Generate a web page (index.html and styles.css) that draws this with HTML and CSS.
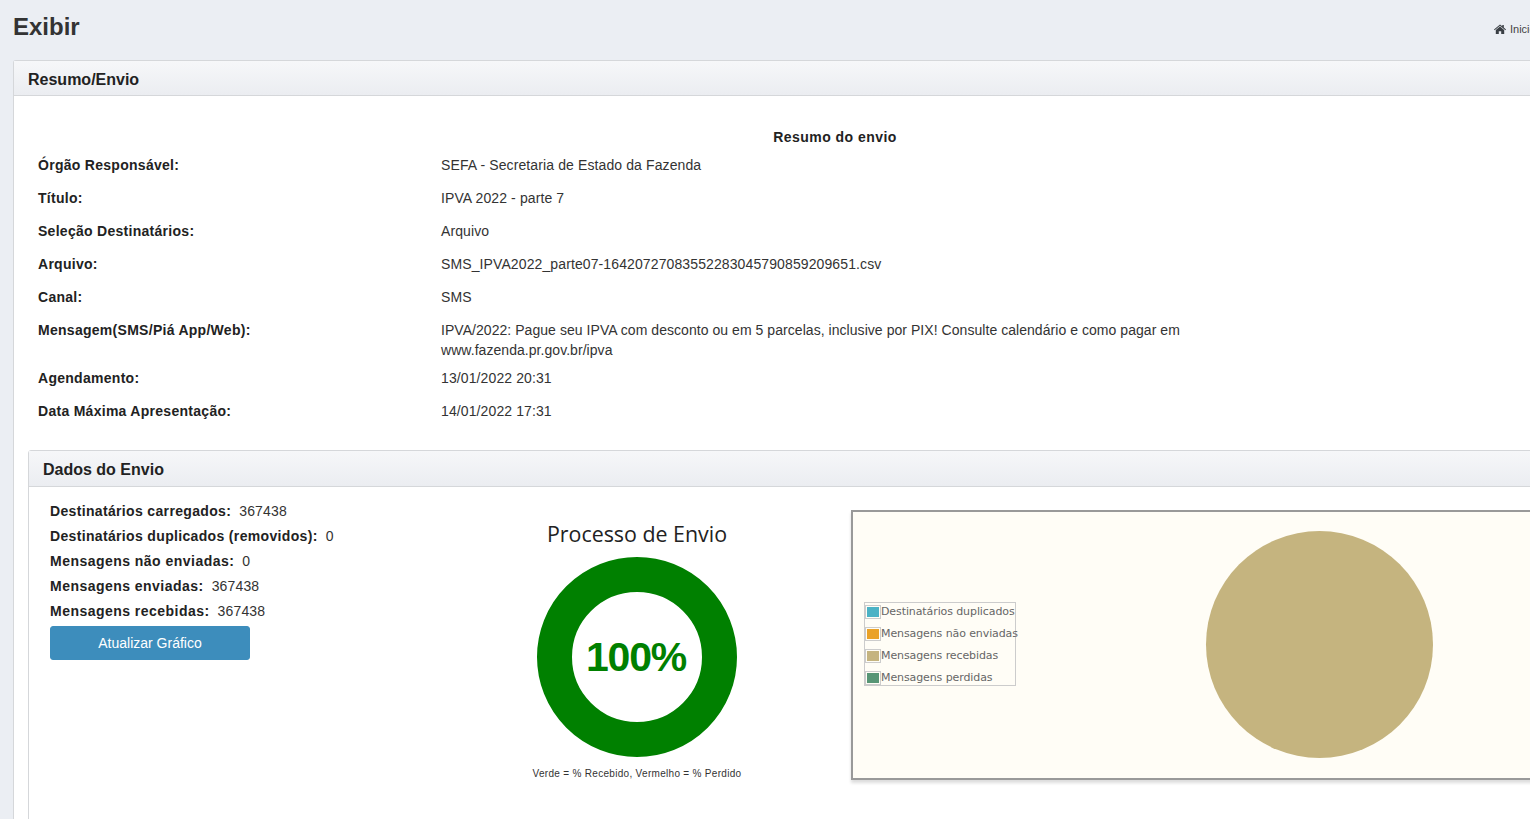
FILE: index.html
```html
<!DOCTYPE html>
<html lang="pt-BR">
<head>
<meta charset="utf-8">
<title>Exibir</title>
<link rel="stylesheet" href="styles.css">
</head>
<body>
<div class="page">
  <header class="page-header">
    <h1 class="page-title">Exibir</h1>
    <nav class="crumb">
      <svg class="home" viewBox="0 0 12 10" width="12" height="10"><path d="M6 .4 0 5.4l.6.8L6 1.8l5.4 4.4.6-.8-2.2-1.8V1H8.3v1.3zM1.8 6v4h3V7.2h2.4V10h3V6L6 2.6z" fill="#3a3f44"/></svg>
      <span>Inicio</span>
    </nav>
  </header>
  <section class="panel">
    <div class="panel-head"><h2 class="panel-title">Resumo/Envio</h2></div>
    <div class="panel-body">
      <div class="summary-title">Resumo do envio</div>
      <dl class="summary">
        <dt>Órgão Responsável:</dt><dd>SEFA - Secretaria de Estado da Fazenda</dd>
        <dt>Título:</dt><dd>IPVA 2022 - parte 7</dd>
        <dt>Seleção Destinatários:</dt><dd>Arquivo</dd>
        <dt>Arquivo:</dt><dd>SMS_IPVA2022_parte07-16420727083552283045790859209651.csv</dd>
        <dt>Canal:</dt><dd>SMS</dd>
        <dt>Mensagem(SMS/Piá App/Web):</dt><dd class="long">IPVA/2022: Pague seu IPVA com desconto ou em 5 parcelas, inclusive por PIX! Consulte calendário e como pagar em www.fazenda.pr.gov.br/ipva</dd>
        <dt>Agendamento:</dt><dd>13/01/2022 20:31</dd>
        <dt>Data Máxima Apresentação:</dt><dd>14/01/2022 17:31</dd>
      </dl>
      <section class="panel inner">
        <div class="panel-head inner-head"><h2 class="panel-title">Dados do Envio</h2></div>
        <div class="data-body">
          <div class="stats">
            <p class="stat"><b>Destinatários carregados:</b> 367438</p>
            <p class="stat"><b>Destinatários duplicados (removidos):</b> 0</p>
            <p class="stat msg"><b>Mensagens não enviadas:</b> 0</p>
            <p class="stat msg"><b>Mensagens enviadas:</b> 367438</p>
            <p class="stat msg"><b>Mensagens recebidas:</b> 367438</p>
            <button class="btn" type="button">Atualizar Gráfico</button>
          </div>
          <div class="gauge-col">
            <div class="gauge-title">Processo de Envio</div>
            <div class="gauge"><span class="gauge-value">100%</span></div>
            <div class="gauge-note">Verde = % Recebido, Vermelho = % Perdido</div>
          </div>
          <div class="chart">
            <div class="pie"></div>
            <ul class="legend">
              <li><i class="swatch c1"></i>Destinatários duplicados</li>
              <li><i class="swatch c2"></i>Mensagens não enviadas</li>
              <li><i class="swatch c3"></i>Mensagens recebidas</li>
              <li><i class="swatch c4"></i>Mensagens perdidas</li>
            </ul>
          </div>
        </div>
      </section>
    </div>
  </section>
</div>
</body>
</html>
```
FILE: styles.css
```css
html, body { margin: 0; height: 100%; overflow: hidden; }
body { background: #ebeef3; font-family: "Liberation Sans", Arial, sans-serif; font-size: 14px; color: #222; }
.page { width: 1600px; height: 819px; padding: 0 0 0 13px; box-sizing: border-box; }
.page-header { display: flex; justify-content: space-between; height: 60px; width: 1587px; box-sizing: border-box; }
.page-title { margin: 13px 0 0; font-size: 24px; line-height: 28px; font-weight: 700; color: #333; }
.crumb { display: flex; align-items: center; gap: 4px; height: 12px; margin-top: 23px; width: 106px; font-size: 11px; color: #444; box-sizing: border-box; }
.panel { background: #fff; border: 1px solid #d5d7da; border-radius: 3px 0 0 3px; }
.page > .panel { width: 1587px; box-sizing: border-box; height: 800px; border-bottom: 0; }
.panel-head { height: 30px; padding: 4px 14px 0; display: flex; align-items: center; background: linear-gradient(#f6f7f9, #ebedf1); border-bottom: 1px solid #d5d7da; }
.inner-head { height: 33px; padding-top: 2px; }
.panel-title { margin: 0; font-size: 16px; font-weight: 700; color: #222; }
.panel-body { padding: 33px 0 0 14px; }
.summary-title { width: 1614px; font-weight: 700; text-align: center; line-height: 16px; letter-spacing: .47px; }
.summary { display: grid; grid-template-columns: 403px 740px; margin: 10px 0 0; padding-left: 10px; row-gap: 13px; }
.summary dt { font-weight: 700; line-height: 20px; letter-spacing: .28px; color: #222; }
.summary dd { margin: 0; line-height: 20px; letter-spacing: .11px; color: #333; }
.summary .long { margin-bottom: -5px; letter-spacing: .05px; }
.inner { margin-top: 29px; width: 1540px; height: 400px; }
.data-body { display: flex; padding: 14px 0 0 21px; }
.stats { width: 387px; flex: none; }
.stat { margin: 0; height: 25px; line-height: 20px; letter-spacing: .14px; color: #333; }
.stat b { letter-spacing: .34px; color: #222; margin-right: 4px; }
.msg b { letter-spacing: .47px; }
.btn { display: block; width: 200px; height: 34px; padding: 0; background: #3d8dbc; border: 1px solid #3d8dbc; border-radius: 3px; color: #fff; font: 14px "Liberation Sans", Arial, sans-serif; }
.gauge-col { width: 400px; flex: none; display: flex; flex-direction: column; align-items: center; padding-top: 18px; }
.gauge-title { font-family: "Open Sans", sans-serif; font-size: 21.4px; line-height: 30px; color: #222; }
.gauge { width: 200px; height: 200px; margin-top: 8px; box-sizing: border-box; border: 35px solid #008000; border-radius: 50%; display: flex; align-items: center; justify-content: center; }
.gauge-value { font-size: 41px; font-weight: 700; letter-spacing: -1.2px; margin-left: -2px; color: #008000; }
.gauge-note { margin-top: 11px; font-size: 10px; line-height: 12px; letter-spacing: .3px; color: #333; }
.chart { position: relative; flex: none; margin: 9px 0 0 14px; width: 900px; height: 270px; box-sizing: border-box; background: #fffdf6; border: 2px solid #999; box-shadow: 0 3px 3px #ddd; }
.pie { position: absolute; left: 353px; top: 19px; width: 227px; height: 227px; border-radius: 50%; background: #c5b47f; }
.legend { position: absolute; left: 11px; top: 90px; margin: 0; padding: 0; list-style: none; width: 150px; height: 82px; background: #fffdf6; border: 1px solid #ccc; font: 11px/22px "DejaVu Sans", Verdana, sans-serif; letter-spacing: -.1px; color: #666; white-space: nowrap; }
.legend li { display: flex; align-items: center; height: 22px; position: relative; top: -2px; }
.swatch { flex: none; width: 12px; height: 10px; margin: 0; border: 1px solid #ccc; padding: 1px; background-clip: content-box; }
.c1 { background-color: #4bb2c5; }
.c2 { background-color: #eaa228; }
.c3 { background-color: #c5b47f; }
.c4 { background-color: #579575; }
```
